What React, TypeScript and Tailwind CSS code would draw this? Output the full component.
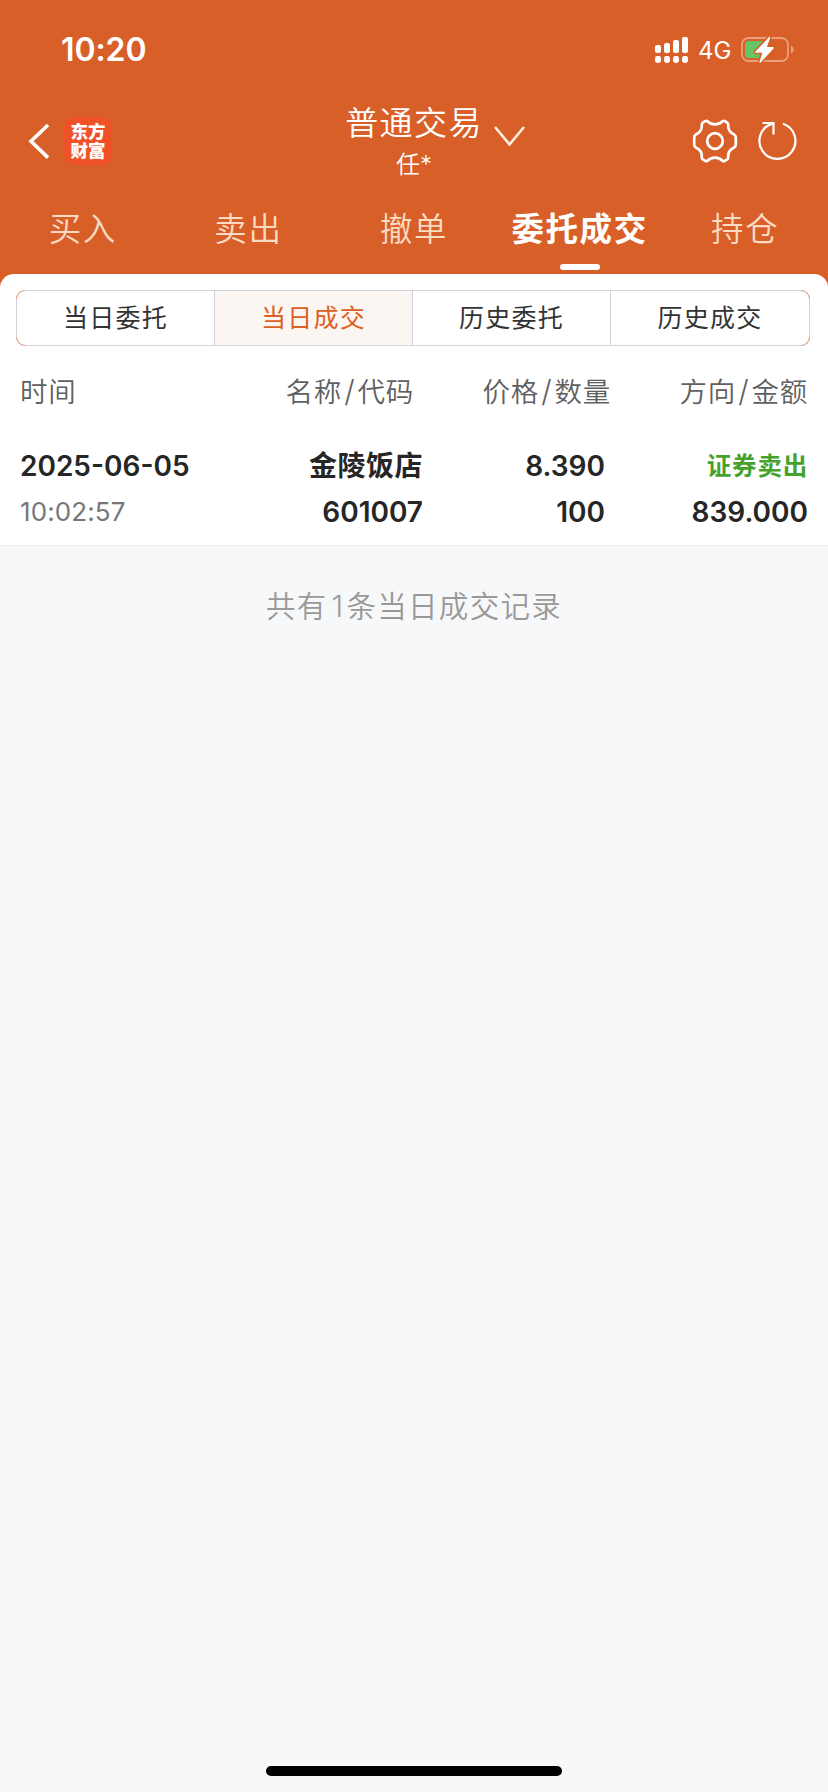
import React, { useState } from 'react';

const TABS = ['买入', '卖出', '撤单', '委托成交', '持仓'];
const SEGMENTS = ['当日委托', '当日成交', '历史委托', '历史成交'];
const COLUMNS = [
  ['名称', '代码'],
  ['价格', '数量'],
  ['方向', '金额'],
];

const StatusBar: React.FC = () => (
  <div className="h-[100px] flex items-center justify-between pl-[61px] pr-[33px]">
    <span className="text-[32px] leading-none font-semibold tracking-[-0.1px]">10:20</span>
    <div className="flex items-center">
      <svg width="34" height="28" viewBox="0 0 34 28" fill="#fff">
        <rect x="0" y="9" width="6" height="8" rx="2" />
        <rect x="9" y="7" width="6" height="10" rx="2" />
        <rect x="18" y="4" width="6" height="13" rx="2" />
        <rect x="27" y="1" width="6" height="16" rx="2" />
        <rect x="0" y="20" width="6" height="7" rx="2.4" />
        <rect x="9" y="20" width="6" height="7" rx="2.4" />
        <rect x="18" y="20" width="6" height="7" rx="2.4" />
        <rect x="27" y="20" width="6" height="7" rx="2.4" />
      </svg>
      <span className="ml-[9px] mt-[2px] w-[34px] text-[24px] leading-none">4G</span>
      <svg className="ml-[9px]" width="54" height="28" viewBox="0 0 54 28">
        <rect x="1" y="2" width="46" height="23" rx="6.5" fill="none" stroke="#e9a07c" strokeWidth="1.8" />
        <path d="M50 9.500v8c3.600-1.500 3.600-6.500 0-8z" fill="#e9a07c" />
        <rect x="4" y="5" width="19" height="17" rx="3.500" fill="#65c466" />
        <path
          d="M28.400.8 14.500 15.500q-.8 1.200.8 1.200h6L18.400 26q0 1.500 1.300.5L32.600 12.500q.8-1.500-.8-1.500h-5.800L29.200 1.500q0-1.200-.8-.7z"
          fill="#fff"
          stroke="#d85f28"
          strokeWidth="3.200"
          paintOrder="stroke"
        />
      </svg>
    </div>
  </div>
);

const NavBar: React.FC = () => (
  <div className="h-[84px] grid grid-cols-[1fr_auto_1fr] items-center">
    <div className="flex items-center pl-[28px] pb-[4px]">
      <svg width="22" height="36" viewBox="0 0 22 36" fill="none" stroke="#fff" strokeWidth="3.6">
        <path d="M20 2 3 18.300l17 16.300" />
      </svg>
      <div className="ml-[14px] size-[48px] rounded-[10px] bg-[#f05228] flex flex-col items-center justify-center text-[17.500px] leading-[19px] font-black">
        <span>东方</span>
        <span>财富</span>
      </div>
    </div>
    <div className="relative flex flex-col items-center pt-px">
      <span className="text-[33px] leading-[44px] tracking-[1.400px] font-[350]">普通交易</span>
      <span className="text-[24px] leading-[40px] font-[350]">任*</span>
      <svg className="absolute left-[148px] top-[25px]" width="34" height="24" viewBox="0 0 34 24" fill="none" stroke="#ffeee2" strokeWidth="2.600">
        <path d="M2 2l14.500 17.500L31 2" />
      </svg>
    </div>
    <div className="flex items-center justify-end gap-[18px] pr-[29px] pb-[4px]">
      <svg width="48" height="48" viewBox="0 0 48 48" fill="none" stroke="#fff" strokeWidth="2.700" strokeLinejoin="round">
        <path d="M16.500 4.200C18.500 6.300 21 7.300 24 7.300S29.500 6.300 31.500 4.200Q32.600 3.500 33.800 4.200L36.300 5.700Q37.300 6.500 37.200 7.700C36.800 12.500 39 15.800 43.200 17.600Q44.800 18.600 44.800 20.500V27.500Q44.800 29.400 43.200 30.400C39 32.200 36.800 35.500 37.200 40.300Q37.300 41.500 36.300 42.300L33.800 43.800Q32.600 44.500 31.500 43.800C29.500 41.700 27 40.700 24 40.700S18.500 41.700 16.500 43.800Q15.400 44.500 14.200 43.800L11.700 42.300Q10.700 41.500 10.800 40.300C11.200 35.500 9 32.200 4.800 30.400Q3.200 29.400 3.200 27.500V20.500Q3.200 18.600 4.800 17.600C9 15.800 11.200 12.500 10.800 7.700Q10.700 6.500 11.700 5.700L14.200 4.200Q15.400 3.500 16.500 4.200Z" />
        <circle cx="24" cy="24" r="7.800" />
      </svg>
      <svg width="42" height="42" viewBox="0 0 42 42" fill="none" stroke="#fff" strokeWidth="2.200">
        <path d="M26 3.800A18 18 0 1 1 15.500 3.600" />
        <path d="M5.500 3H16.500V14.500" />
      </svg>
    </div>
  </div>
);

export default function App() {
  const [tab, setTab] = useState(3);
  const [segment, setSegment] = useState(1);

  return (
    <div className="w-[828px] h-[1792px] flex flex-col bg-[#f7f8fa] overflow-hidden font-[Inter,'Noto_Sans_CJK_SC',sans-serif]">
      <header className="h-[286px] shrink-0 bg-[#d85f28] text-white">
        <StatusBar />
        <NavBar />
        <nav className="h-[90px] grid grid-cols-5">
          {TABS.map((name, i) => (
            <button
              key={name}
              onClick={() => setTab(i)}
              className={`flex flex-col items-center pt-[24px] whitespace-nowrap text-[32.500px] leading-[44px] tracking-[1.600px] ${
                i === tab ? 'font-bold text-white' : 'font-[350] text-[#fadbc4]'
              }`}
            >
              <span>{name}</span>
              {i === tab && <span className="mt-[12px] w-[40px] h-[6px] rounded-full bg-white" />}
            </button>
          ))}
        </nav>
      </header>

      <main className="-mt-[12px] h-[272px] shrink-0 bg-white rounded-t-[14px] border-b border-[#ebebeb] pt-[16px]">
        <div className="relative ml-[16px] w-[794px] h-[56px]">
          <div className="h-full grid grid-cols-4 rounded-[9px] border border-[#d3d4db] divide-x divide-[#d3d4db] overflow-hidden">
            {SEGMENTS.map((name, i) => (
              <button
                key={name}
                onClick={() => setSegment(i)}
                className={`pt-[2px] text-[25px] tracking-[1.200px] font-normal ${
                  i === segment ? 'bg-[#fcf6f2] text-[#dc5f24]' : 'text-[#333]'
                }`}
              >
                {name}
              </button>
            ))}
          </div>
          {/* tinted corners */}
          <span className="absolute top-0 left-0 size-[9px] border-t border-l border-[#e3a27f] rounded-tl-[9px]" />
          <span className="absolute top-0 right-0 size-[9px] border-t border-r border-[#e3a27f] rounded-tr-[9px]" />
          <span className="absolute bottom-0 left-0 size-[9px] border-b border-l border-[#e3a27f] rounded-bl-[9px]" />
          <span className="absolute bottom-0 right-0 size-[9px] border-b border-r border-[#e3a27f] rounded-br-[9px]" />
        </div>

        <div className="mt-[26px] pl-[20px] grid grid-cols-[195px_199px_197px_197px] text-[27.500px] leading-[40px] tracking-[0.800px] font-[350] text-[#606060]">
          <span>时间</span>
          {COLUMNS.map(([first, second]) => (
            <span key={first} className="text-right">
              {first}
              <span className="mx-[2px] text-[30px] leading-none">/</span>
              {second}
            </span>
          ))}
        </div>

        <div className="mt-[31px] pl-[20px] grid grid-cols-[195px_208px_182px_203px] text-[28px] leading-[46px] font-semibold text-[#262626]">
          <span>2025-06-05</span>
          <span className="text-right tracking-[0.500px]">金陵饭店</span>
          <span className="text-right">8.390</span>
          <span className="text-right text-[24.500px] tracking-[0.800px] text-[#46a22c]">证券卖出</span>
          <span className="text-[26px] font-normal tracking-[0.100px] text-[#777]">10:02:57</span>
          <span className="text-right">601007</span>
          <span className="text-right">100</span>
          <span className="text-right">839.000</span>
        </div>
      </main>

      <p className="mt-[38px] text-center text-[29.500px] leading-[44px] tracking-[1.300px] font-[350] text-[#999]">
        共有<span className="ml-[4px] mr-[2px]">1</span>条当日成交记录
      </p>

      <div className="mt-auto mb-[16px] mx-auto w-[296px] h-[10px] rounded-full bg-black" />
    </div>
  );
}
